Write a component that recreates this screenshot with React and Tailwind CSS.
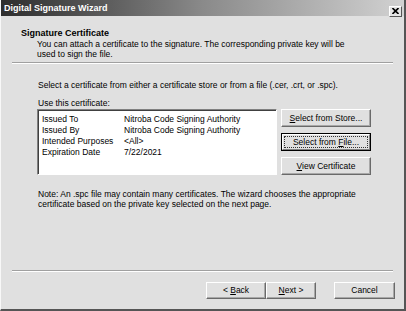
import React from 'react';

const font = { fontFamily: '"Liberation Sans", Arial, sans-serif' };

function WinButton({ children, focused = false, className = '' }) {
  if (focused) {
    return (
      <div className={`border border-black ${className}`}>
        <div className="h-full border-t border-l border-t-white border-l-white border-r border-b border-r-[#808080] border-b-[#808080] bg-[#e0e0e0] p-[1px]">
          <div className="h-full border border-dotted border-[#333] flex items-center justify-center text-[8.5px] text-black whitespace-nowrap">
            {children}
          </div>
        </div>
      </div>
    );
  }
  return (
    <div
      className={`flex items-center justify-center bg-[#e0e0e0] border-t border-l border-t-white border-l-white border-r border-b border-r-[#6a6a6a] border-b-[#6a6a6a] shadow-[inset_-1px_-1px_0_#a8a8a8] text-[8.5px] text-black whitespace-nowrap ${className}`}
    >
      {children}
    </div>
  );
}

const rows = [
  ['Issued To', 'Nitroba Code Signing Authority'],
  ['Issued By', 'Nitroba Code Signing Authority'],
  ['Intended Purposes', '<All>'],
  ['Expiration Date', '7/22/2021'],
];

export default function App() {
  return (
    <div
      className="w-[406px] h-[311px] bg-[#e0e0e0] border-l border-l-[#f8f8f8] border-r-2 border-r-[#555] border-b-2 border-b-[#555] flex flex-col overflow-hidden select-none"
      style={font}
    >
      {/* Title bar */}
      <div className="h-[16px] shrink-0 flex items-center justify-between pl-[3px] pr-[2px] bg-gradient-to-r from-[#2e2e2e] via-[#8a8a8a] to-[#d2d2d2]">
        <span className="text-[9px] font-bold text-white leading-none">Digital Signature Wizard</span>
        <div className="w-[13px] h-[11px] mt-[6px] bg-[#e4e4e4] border-t border-l border-t-white border-l-white border-r border-b border-r-[#555] border-b-[#555] flex items-center justify-center">
          <svg width="7" height="6" viewBox="0 0 7 6">
            <path d="M0.5 0 L6.5 6 M6.5 0 L0.5 6" stroke="#000" strokeWidth="1.6" />
          </svg>
        </div>
      </div>

      {/* Header */}
      <div className="pl-[20px] pt-[11px] text-[9px] font-bold text-black leading-[12px]">Signature Certificate</div>
      <div className="pl-[36px] pt-[0px] text-[8.5px] text-black leading-[10px] whitespace-nowrap">
        You can attach a certificate to the signature. The corresponding private key will be
        <br />
        used to sign the file.
      </div>
      <div className="mx-[11px] mt-[3px] h-[2px] border-t border-t-[#a0a0a0] border-b border-b-white" />

      {/* Body */}
      <div className="pl-[37px] pt-[15px] text-[8.5px] text-black leading-[12px] whitespace-nowrap">
        Select a certificate from either a certificate store or from a file (.cer, .crt, or .spc).
      </div>
      <div className="pl-[37px] pt-[6px] text-[8.5px] text-black leading-[12px]">Use this certificate:</div>

      <div className="flex pl-[36px] gap-[4px]">
        <div className="w-[240px] h-[66px] bg-white border-t border-l border-t-[#808080] border-l-[#808080] border-r border-b border-r-white border-b-white shadow-[inset_1px_1px_0_#404040] pl-[4px] pt-[4px]">
          {rows.map(([k, v]) => (
            <div key={k} className="flex text-[8.5px] text-black leading-[11px] whitespace-nowrap">
              <span className="w-[82px] shrink-0">{k}</span>
              <span>{v}</span>
            </div>
          ))}
        </div>
        <div className="flex flex-col gap-[6px]">
          <WinButton className="w-[90px] h-[18px]">
            <span><u>S</u>elect from Store...</span>
          </WinButton>
          <WinButton focused className="w-[90px] h-[18px]">
            <span>Select from <u>F</u>ile...</span>
          </WinButton>
          <WinButton className="w-[90px] h-[18px]">
            <span><u>V</u>iew Certificate</span>
          </WinButton>
        </div>
      </div>

      <div className="pl-[37px] pt-[14px] text-[8.5px] text-black leading-[10px] whitespace-nowrap">
        Note: An .spc file may contain many certificates. The wizard chooses the appropriate
        <br />
        certificate based on the private key selected on the next page.
      </div>

      <div className="flex-1" />
      <div className="mx-[11px] h-[2px] border-t border-t-[#a0a0a0] border-b border-b-white" />

      {/* Footer buttons */}
      <div className="flex justify-end pr-[9px] pt-[10px] pb-[10px]">
        <WinButton className="w-[60px] h-[17px]">
          <span>&lt; <u>B</u>ack</span>
        </WinButton>
        <WinButton className="w-[50px] h-[17px]">
          <span><u>N</u>ext &gt;</span>
        </WinButton>
        <WinButton className="w-[61px] h-[17px] ml-[18px]">
          <span>Cancel</span>
        </WinButton>
      </div>
    </div>
  );
}
